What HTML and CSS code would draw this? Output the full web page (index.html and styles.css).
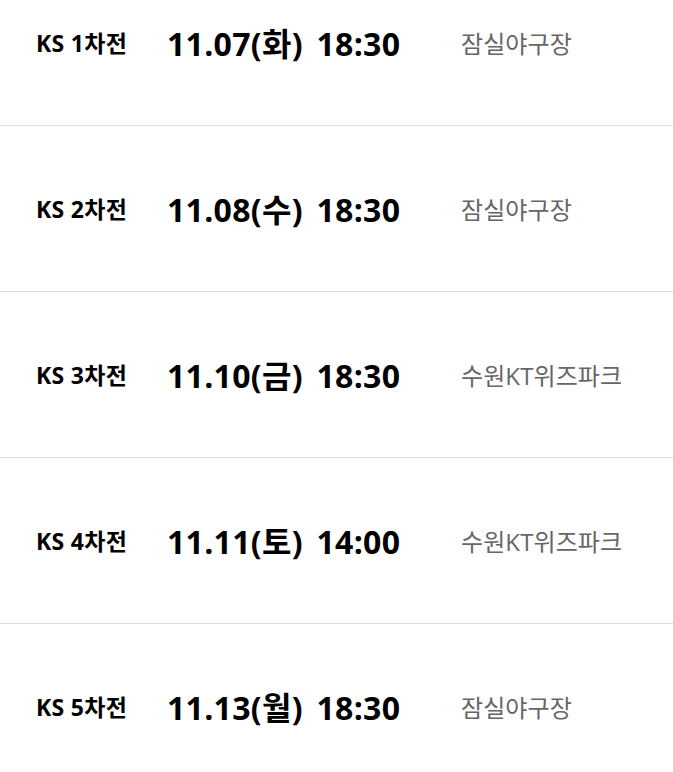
FILE: index.html
```html
<!DOCTYPE html>
<html lang="ko">
<head>
<meta charset="utf-8">
<link rel="stylesheet" href="styles.css">
</head>
<body>
<ul class="schedule">
  <li class="game"><span class="round">KS 1차전</span><span class="date">11.07(화) 18:30</span><span class="venue">잠실야구장</span></li>
  <li class="game"><span class="round">KS 2차전</span><span class="date">11.08(수) 18:30</span><span class="venue">잠실야구장</span></li>
  <li class="game"><span class="round">KS 3차전</span><span class="date">11.10(금) 18:30</span><span class="venue">수원KT위즈파크</span></li>
  <li class="game"><span class="round">KS 4차전</span><span class="date">11.11(토) 14:00</span><span class="venue">수원KT위즈파크</span></li>
  <li class="game"><span class="round">KS 5차전</span><span class="date">11.13(월) 18:30</span><span class="venue">잠실야구장</span></li>
</ul>
</body>
</html>
```
FILE: styles.css
```css
html, body {
  margin: 0;
  padding: 0;
  background: #fff;
  overflow: hidden;
}
body {
  font-family: "Open Sans", "Noto Sans CJK KR", sans-serif;
  color: #000;
}
.schedule {
  list-style: none;
  margin: -40px 0 0;
  padding: 0;
}
.game {
  border-bottom: 1px solid #dedede;
  display: grid;
  grid-template-columns: 131px 294px 1fr;
  align-items: center;
  padding: 0 0 1px 36px;
  height: 164px;
}
.round {
  font-size: 23px;
  font-weight: 700;
  letter-spacing: 0.3px;
}
.date {
  font-size: 32px;
  font-weight: 700;
  letter-spacing: 0.3px;
  word-spacing: 5px;
}
.venue {
  font-size: 24px;
  color: #666;
  letter-spacing: 0.1px;
}
```
